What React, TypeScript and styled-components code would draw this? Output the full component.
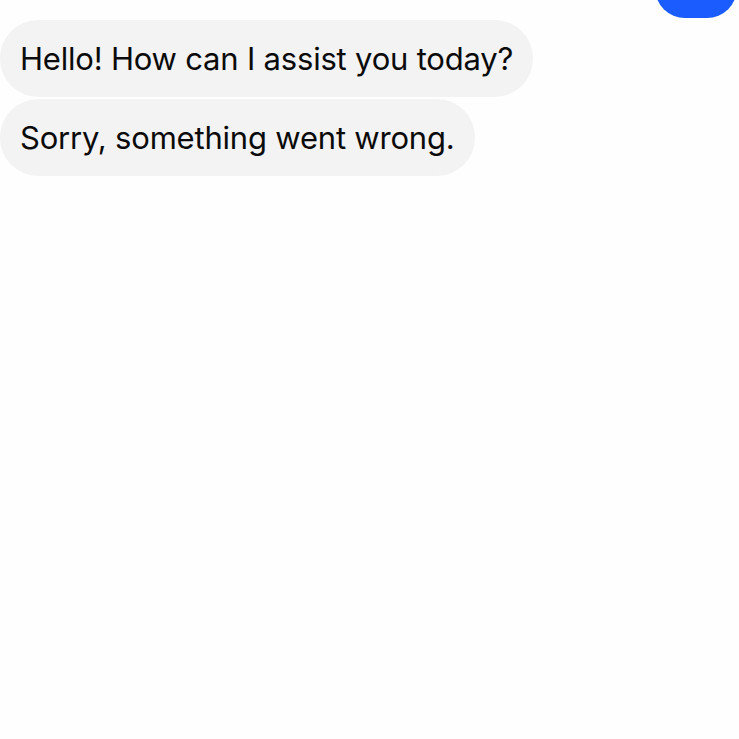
import React from 'react'
import styled, { createGlobalStyle } from 'styled-components'

const GlobalStyle = createGlobalStyle`
  html, body {
    margin: 0;
    padding: 0;
    background: #ffffff;
  }
  body {
    font-family: Inter, "Liberation Sans", sans-serif;
  }
`;

const Thread = styled.div`
  width: 739px;
  height: 739px;
  overflow: hidden;
  display: flex;
  flex-direction: column;
  gap: 2px;
  background: #fefefe;
`;

const Row = styled.div<{ $out?: boolean }>`
  display: flex;
  justify-content: ${(p) => (p.$out ? 'flex-end' : 'flex-start')};
  padding-right: ${(p) => (p.$out ? '2px' : '0')};
`;

const Bubble = styled.div<{ $out?: boolean }>`
  background: ${(p) => (p.$out ? '#1a5cff' : '#f3f3f3')};
  color: ${(p) => (p.$out ? '#ffffff' : '#0b0b0b')};
  border-radius: 38px;
  padding: 21px 20px 20px 20px;
  font-size: 31px;
  line-height: 36px;
  letter-spacing: -0.2px;
  white-space: nowrap;
`;

const CutBubble = styled(Bubble)`
  width: 82px;
  height: 60px;
  padding: 0;
  margin-top: -42px;
  border-radius: 38px;
`;

interface Message {
  text: string;
}

const messages: Message[] = [
  { text: 'Hello! How can I assist you today?' },
  { text: 'Sorry, something went wrong.' },
];

export default function App() {
  return (
    <>
      <GlobalStyle />
      <Thread>
        <Row $out>
          <CutBubble $out />
        </Row>
        {messages.map((m, i) => (
          <Row key={i}>
            <Bubble>{m.text}</Bubble>
          </Row>
        ))}
      </Thread>
    </>
  );
}
